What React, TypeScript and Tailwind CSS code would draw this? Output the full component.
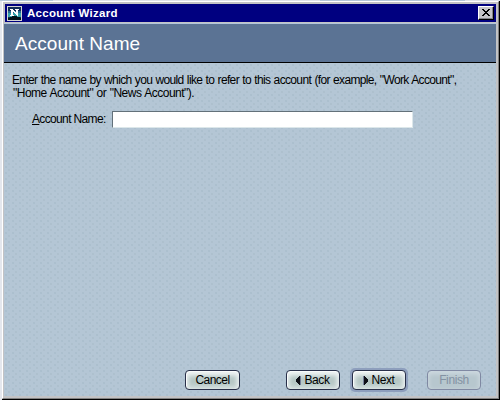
import React from "react";

type WizardButtonProps = {
  label: string;
  className: string;
  arrow?: "left" | "right";
  disabled?: boolean;
};

function Arrow({ direction }: { direction: "left" | "right" }) {
  return (
    <svg width="5" height="9" viewBox="0 0 5 9" shapeRendering="crispEdges" className="mr-[3px] shrink-0">
      <path
        d={direction === "left" ? "M3 0h1v9H3V8H2V7H1V6H0V3h1V2h1V1h1z" : "M1 0h1v1h1v1h1v1h1v3H4v1H3v1H2v1H1z"}
        fill="#101018"
      />
      <path d={direction === "left" ? "M4 0h1v9H4z" : "M0 0h1v9H0z"} fill="#76809a" />
    </svg>
  );
}

function WizardButton({ label, className, arrow, disabled }: WizardButtonProps) {
  return (
    <button
      disabled={disabled}
      className={`flex h-5 items-center justify-center rounded-[4px] border text-[12px] leading-[18px] ${
        disabled
          ? "border-[#8089a3] bg-[#b7c7ce] text-[#8492a3] shadow-[inset_0_2px_4px_1px_#cdd8df]"
          : "border-[#29304a] bg-[#b6c7c5] text-black shadow-[inset_1px_1px_0_#f8fafa,inset_0_4px_5px_#f0f4f4,inset_0_0_5px_2px_#e0e9e9]"
      } ${className}`}
    >
      {arrow && <Arrow direction={arrow} />}
      <span className="whitespace-nowrap">{label}</span>
    </button>
  );
}

export default function App() {
  return (
    <div className="flex h-[400px] w-[500px] flex-col overflow-hidden bg-[#e4e7ed] pl-[2px] font-['Liberation_Sans',Arial,sans-serif]">
      <div className="-ml-[2px] flex h-px shrink-0">
        <div className="w-[53px] bg-[#b5c7d9]" />
        <div className="w-[267px] bg-[#dfe3e9]" />
        <div className="w-[145px] bg-[#b5c7d9]" />
        <div className="grow bg-[#dfe3e9]" />
      </div>
      <div className="flex min-h-0 grow flex-col border-r border-b border-black">
        <div className="flex min-h-0 grow flex-col border border-t-white border-r-[#828282] border-b-[#828282] border-l-white bg-[#c3c3c5] pt-[2px] pr-[2px] pb-[2px] pl-px">
          <header className="ml-px flex h-[18px] shrink-0 items-center bg-[#000080]">
            <svg width="15" height="15" viewBox="0 0 15 15" shapeRendering="crispEdges" className="ml-[2px] shrink-0">
              <path fill="#d5d5d2" d="M0 0h15v15H0z" />
              <path fill="#102c58" d="M1 1h13v13H1z" />
              <path fill="#236b90" d="M1 5h13v2H1z" />
              <path fill="#35a0aa" d="M1 7h13v4H1z" />
              <path fill="#04131b" d="M1 12h2v-1h2v-1h5v1h3v1h1v2H1z" />
              <path fill="#fff" d="M3 3h3v1h1v1h1v1h1V4H8V3h4v1h-1v6h-1V9H9V8H8V7H7V6H6v3h1v1H3V9h1V4H3z" />
            </svg>
            <h1 className="ml-[5px] grow whitespace-nowrap text-[11.5px] leading-[18px] font-bold tracking-[0.28px] text-white">Account Wizard</h1>
            <button aria-label="Close" className="mr-[2px] flex h-[14px] w-4 items-center justify-center border border-t-white border-r-black border-b-black border-l-white bg-[#c5c5c8] pb-px shadow-[inset_-1px_-1px_0_#85858a]">
              <svg width="8" height="7" viewBox="0 0 8 7" shapeRendering="crispEdges">
                <path d="M0 0h2v1h1v1h2V1h1V0h2v1H7v1H6v1H5v1h1v1h1v1h1v1H6V6H5V5H3v1H2v1H0V6h1V5h1V4h1V3H2V2H1V1H0z" />
              </svg>
            </button>
          </header>
          <div className="h-[2px] shrink-0 border-b border-[#b3c5da]" />
          <div className="flex h-[39px] shrink-0 items-center border-b border-black bg-[#5b7394] pt-px pl-[11px]">
            <h2 className="whitespace-nowrap text-[19px] leading-6 tracking-[0.05px] text-white">Account Name</h2>
          </div>
          <main className="flex min-h-0 grow flex-col bg-[#b4c6d5] bg-[radial-gradient(circle_at_2px_2px,#acbfce_0.7px,transparent_1px),radial-gradient(circle_at_5px_5px,#aec0ce_0.7px,transparent_1px)] bg-[size:7px_6px]">
            <p className="mt-[11px] ml-2 text-[12px] leading-[13px] text-black">
              <span className="block whitespace-nowrap tracking-[-0.65px] [word-spacing:0.6px]">
                Enter the name by which you would like to refer to this account (for example, "Work Account",
              </span>
              <span className="ml-px block whitespace-nowrap tracking-[-0.5px] [word-spacing:0.6px]">"Home Account" or "News Account").</span>
            </p>
            <div className="mt-[11px] ml-7 flex items-center">
              <label htmlFor="account-name" className="-mt-[2px] w-[80px] whitespace-nowrap text-[12px] leading-4 tracking-[-0.65px]">
                <span className="underline">A</span>ccount Name:
              </label>
              <input
                id="account-name"
                className="h-[17px] w-[301px] border border-t-[#63717a] border-r-[#dce7ea] border-b-[#dce7ea] border-l-[#63717a] bg-white px-1 text-[12px] outline-none"
              />
            </div>
            <footer className="mt-auto mb-1 ml-[181px] flex items-center">
              <WizardButton label="Cancel" className="w-[55px] tracking-[-0.55px]" />
              <WizardButton label="Back" arrow="left" className="ml-[46px] w-[54px] tracking-[-0.4px]" />
              <div className="ml-[10px] rounded-[5px] bg-[#8e9fbd] p-[2px]">
                <WizardButton label="Next" arrow="right" className="w-[54px] tracking-[-0.4px]" />
              </div>
              <WizardButton label="Finish" disabled className="ml-[19px] w-[54px] tracking-[-0.4px]" />
            </footer>
          </main>
        </div>
      </div>
    </div>
  );
}
